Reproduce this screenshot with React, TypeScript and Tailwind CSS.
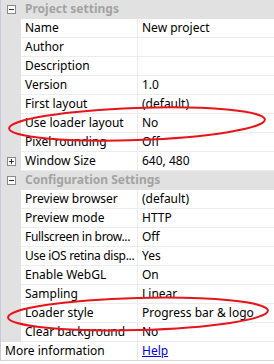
import React from 'react';

type Row = { name: string; value?: string; expand?: boolean; tight?: boolean };

const project: Row[] = [
  { name: 'Name', value: 'New project' },
  { name: 'Author' },
  { name: 'Description' },
  { name: 'Version', value: '1.0' },
  { name: 'First layout', value: '(default)' },
  { name: 'Use loader layout', value: 'No' },
  { name: 'Pixel rounding', value: 'Off' },
  { name: 'Window Size', value: '640, 480', expand: true },
];

const config: Row[] = [
  { name: 'Preview browser', value: '(default)' },
  { name: 'Preview mode', value: 'HTTP' },
  { name: 'Fullscreen in brow...', value: 'Off', tight: true },
  { name: 'Use iOS retina disp...', value: 'Yes', tight: true },
  { name: 'Enable WebGL', value: 'On' },
  { name: 'Sampling', value: 'Linear' },
  { name: 'Loader style', value: 'Progress bar & logo' },
  { name: 'Clear background', value: 'No' },
];

const Box = ({ plus }: { plus?: boolean }) => (
  <div className="relative w-[9px] h-[9px] border border-[#8a8a8a] bg-white">
    <div className="absolute left-[1px] top-[3px] w-[5px] h-[1px] bg-[#333]" />
    {plus && <div className="absolute left-[3px] top-[1px] w-[1px] h-[5px] bg-[#333]" />}
  </div>
);

const Header = ({ title }: { title: string }) => (
  <div className="flex h-[19px] bg-[#e1e1e1] border-b border-[#e1e1e1]">
    <div className="w-[20px] flex items-center justify-center">
      <Box />
    </div>
    <div className="pl-[4px] flex items-center font-bold text-[#a3a3a3]">{title}</div>
  </div>
);

const PropRow = ({ row }: { row: Row }) => (
  <div className="flex h-[19px]">
    <div className="w-[20px] flex items-center justify-center bg-[#e1e1e1]">
      {row.expand && <Box plus />}
    </div>
    <div
      className={`w-[117px] pl-[4px] flex items-center border-b border-r border-[#ececec] bg-white whitespace-nowrap overflow-hidden ${
        row.tight ? 'tracking-[-0.3px]' : ''
      }`}
    >
      {row.name}
    </div>
    <div className="flex-1 pl-[4px] flex items-center border-b border-[#ececec] bg-white whitespace-nowrap">
      {row.value}
    </div>
  </div>
);

export default function App() {
  return (
    <div
      className="relative w-[274px] h-[364px] bg-white text-[12px] text-[#000] leading-none overflow-hidden"
      style={{ fontFamily: '"Noto Sans", "DejaVu Sans", sans-serif' }}
    >
      <div className="border-l border-[#c7cbd6]">
        <Header title="Project settings" />
        {project.map((r) => (
          <PropRow key={r.name} row={r} />
        ))}
        <Header title="Configuration Settings" />
        {config.map((r) => (
          <PropRow key={r.name} row={r} />
        ))}
        <div className="flex h-[19px] border-b border-[#d4d4d4]">
          <div className="w-[137px] pl-[4px] flex items-center border-r border-[#ececec]">
            More information
          </div>
          <div className="flex-1 pl-[4px] flex items-center">
            <span className="text-[#0000ee] underline">Help</span>
          </div>
        </div>
      </div>

      {/* red highlight marks */}
      <svg className="absolute inset-0 pointer-events-none" width="274" height="364">
        <ellipse cx="137" cy="124" rx="128" ry="16" transform="rotate(-2 137 124)" fill="none" stroke="#e8141b" strokeWidth="2" />
        <ellipse cx="138" cy="314" rx="130" ry="16" transform="rotate(-1.5 138 314)" fill="none" stroke="#e8141b" strokeWidth="2" />
      </svg>
    </div>
  );
}
